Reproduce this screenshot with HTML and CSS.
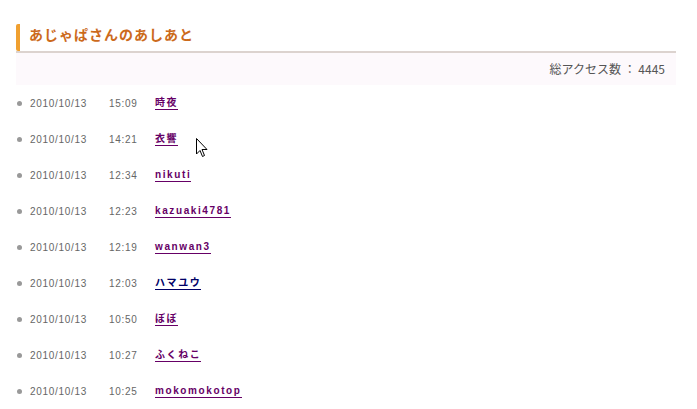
FILE: index.html
```html
<!DOCTYPE html>
<html lang="ja">
<head>
    <meta charset="UTF-8">
    <title>あじゃぱさんのあしあと</title>
    <link rel="stylesheet" href="styles.css">
</head>
<body>

<div class="container">
    <h2 class="title">あじゃぱさんのあしあと</h2>

    <div class="total">総アクセス数 ： 4445</div>

    <ul class="footprints">
        <li><span class="date">2010/10/13</span><span class="time">15:09</span><a href="#" class="visited">時夜</a></li>
        <li><span class="date">2010/10/13</span><span class="time">14:21</span><a href="#" class="visited">衣響</a></li>
        <li><span class="date">2010/10/13</span><span class="time">12:34</span><a href="#" class="visited">nikuti</a></li>
        <li><span class="date">2010/10/13</span><span class="time">12:23</span><a href="#" class="visited">kazuaki4781</a></li>
        <li><span class="date">2010/10/13</span><span class="time">12:19</span><a href="#" class="visited">wanwan3</a></li>
        <li><span class="date">2010/10/13</span><span class="time">12:03</span><a href="#">ハマユウ</a></li>
        <li><span class="date">2010/10/13</span><span class="time">10:50</span><a href="#" class="visited">ぼぼ</a></li>
        <li><span class="date">2010/10/13</span><span class="time">10:27</span><a href="#" class="visited">ふくねこ</a></li>
        <li><span class="date">2010/10/13</span><span class="time">10:25</span><a href="#" class="visited">mokomokotop</a></li>
    </ul>
</div>

<!-- mouse pointer from the screenshot -->
<svg class="cursor" width="12" height="20" viewBox="0 0 12 20">
    <path d="M0.5 0.5 L0.5 16 L4 12.5 L6.5 18.5 L8.5 17.5 L6 11.5 L11 11.5 Z" fill="#fff" stroke="#000" stroke-width="1"/>
</svg>

</body>
</html>
```

FILE: styles.css
```css
body {
    margin: 0;
    background-color: #fff;
    font-family: 'Liberation Sans', 'Noto Sans CJK JP', sans-serif;
}
.container {
    width: 660px;
    padding: 24px 0 0 16px;
}
.title {
    margin: 0;
    padding: 1px 0 8px 9px;
    border-left: 4px solid #f0a030;
    border-radius: 2px 0 0 2px;
    font-size: 14px;
    line-height: 18px;
    color: #cc6a1c;
    font-weight: bold;
    letter-spacing: 1px;
    font-family: 'Noto Sans CJK JP', sans-serif;
    position: relative;
}
.title::after {
    content: "";
    position: absolute;
    left: -4px;
    right: 0;
    bottom: -2px;
    height: 2px;
    background-color: #dcd3cf;
}
.total {
    margin-top: 2px;
    height: 32px;
    line-height: 32px;
    background-color: #fdf9fc;
    text-align: right;
    padding-right: 11px;
    font-size: 12px;
    color: #555;
    font-family: 'Noto Sans CJK JP', sans-serif;
}
.footprints {
    list-style: none;
    margin: 0;
    padding: 0;
}
.footprints li {
    display: flex;
    align-items: center;
    height: 36px;
    font-size: 10px;
    color: #666;
    letter-spacing: 0.7px;
}
.footprints li::before {
    content: "";
    width: 5px;
    height: 5px;
    border-radius: 50%;
    background-color: #999;
    margin: 0 8px 0 1px;
}
.date {
    width: 79px;
}
.time {
    width: 46px;
}
.footprints a {
    font-weight: bold;
    color: #000066;
    letter-spacing: 1.6px;
    text-decoration: none;
    border-bottom: 1px solid currentColor;
    line-height: 13px;
}
.footprints a.visited {
    color: #660066;
}
.cursor {
    position: absolute;
    left: 196px;
    top: 138px;
}
```
